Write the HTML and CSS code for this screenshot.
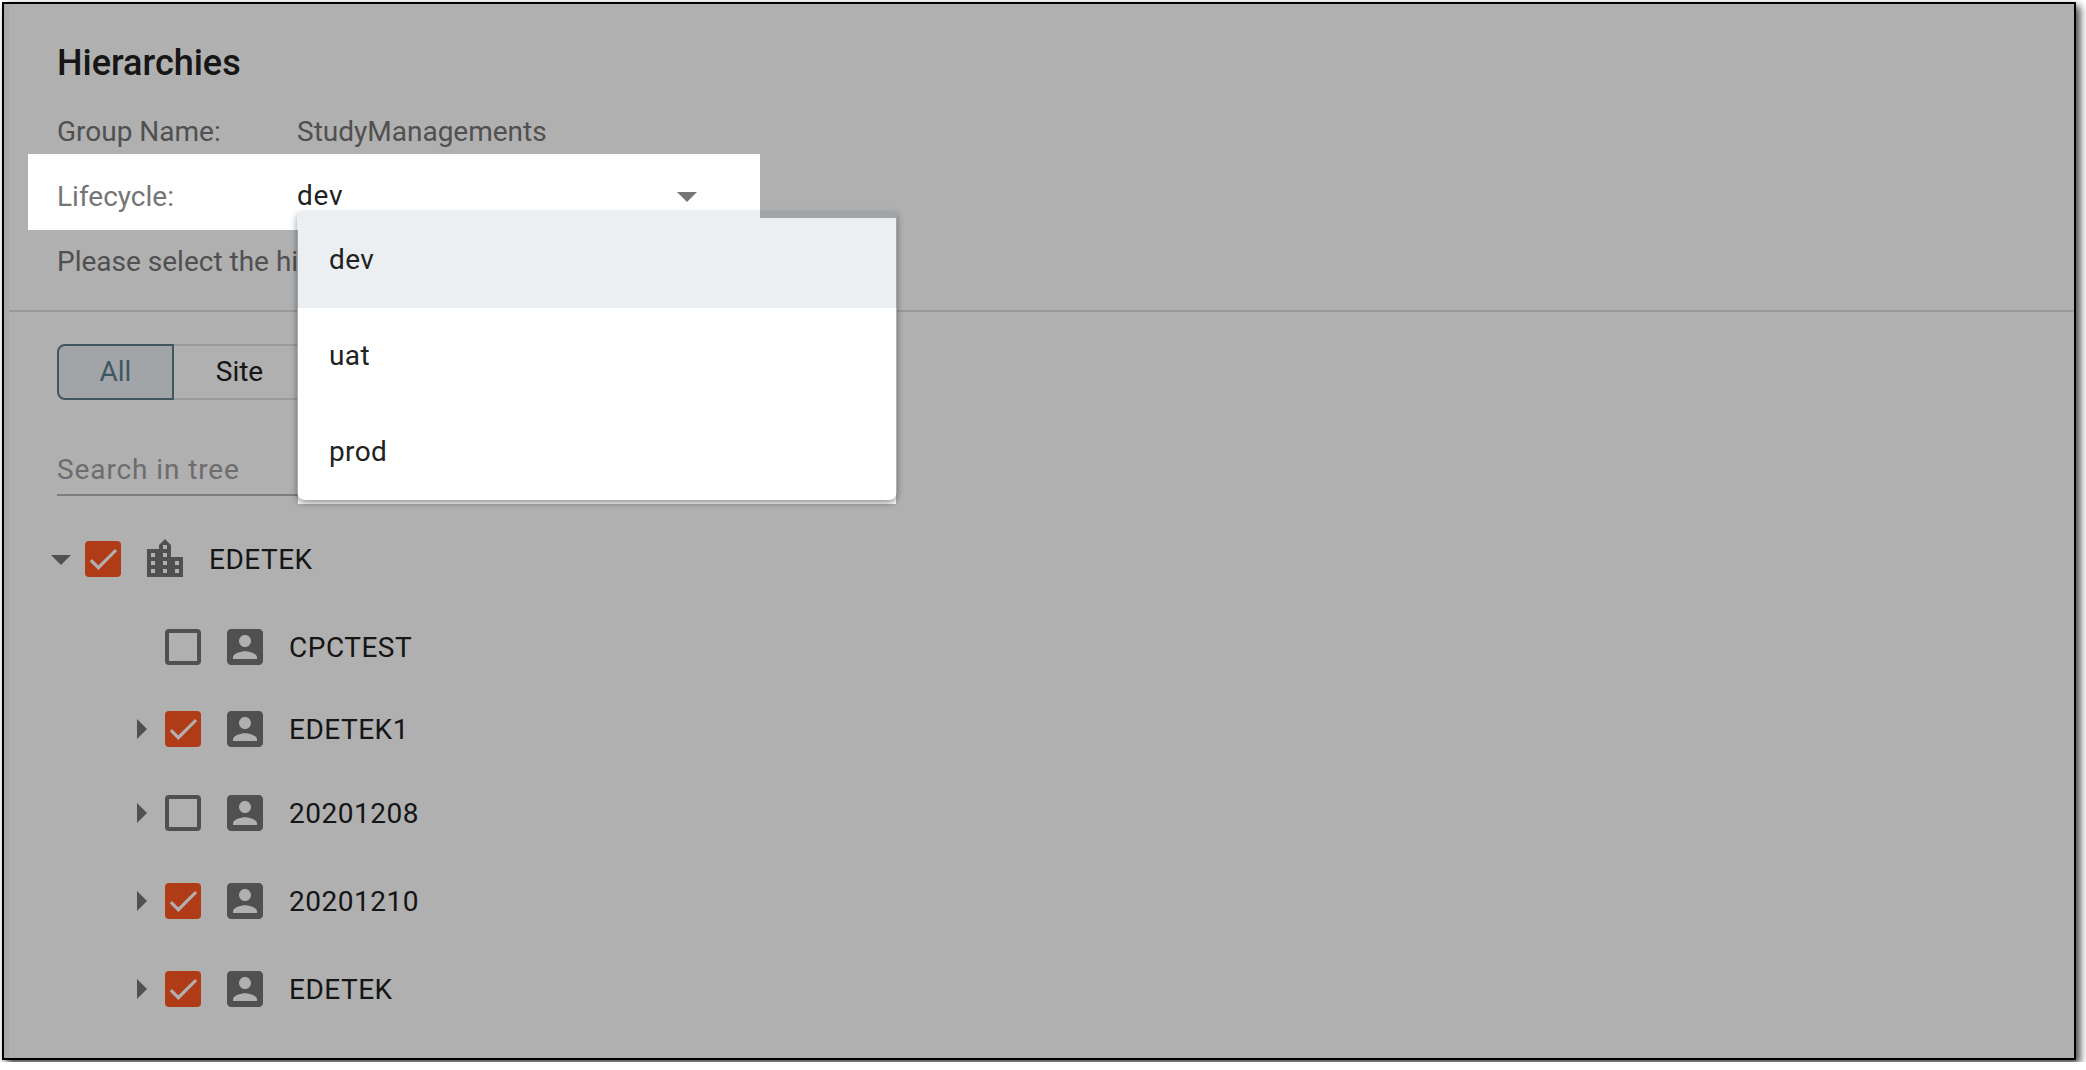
FILE: index.html
```html
<!DOCTYPE html>
<html lang="en">
<head>
    <meta charset="UTF-8">
    <meta name="viewport" content="width=device-width, initial-scale=1.0">
    <title>Hierarchies</title>
    <link rel="stylesheet" href="styles.css">
</head>
<body>

    <!-- Shared icons -->
    <svg class="sprite" width="0" height="0">
        <symbol id="icon-down" viewBox="0 0 24 24"><path d="M7 10l5 5 5-5z"/></symbol>
        <symbol id="icon-right" viewBox="0 0 24 24"><path d="M10 17l5-5-5-5v10z"/></symbol>
        <symbol id="icon-city" viewBox="0 0 24 24"><path d="M15 11V5l-3-3-3 3v2H3v14h18V11h-6zm-8 8H5v-2h2v2zm0-4H5v-2h2v2zm0-4H5V9h2v2zm6 8h-2v-2h2v2zm0-4h-2v-2h2v2zm0-4h-2V9h2v2zm0-4h-2V5h2v2zm6 12h-2v-2h2v2zm0-4h-2v-2h2v2z"/></symbol>
        <symbol id="icon-account" viewBox="0 0 24 24"><path d="M19 3H5c-1.1 0-2 .9-2 2v14c0 1.1.9 2 2 2h14c1.1 0 2-.9 2-2V5c0-1.1-.9-2-2-2z"/><path class="person" d="M12 6c1.65 0 3 1.35 3 3s-1.35 3-3 3-3-1.35-3-3 1.35-3 3-3zM18 18H6v-.8c0-2 4-3.100 6-3.100s6 1.100 6 3.100z"/></symbol>
        <symbol id="icon-check" viewBox="0 0 24 24"><path d="M3.900 12.800L8.900 17.800 20.700 6"/></symbol>
    </svg>

    <div class="window">
        <div class="panel">
            <header class="header">
                <h1>Hierarchies</h1>
                <div class="field">
                    <span class="label">Group Name:</span>
                    <span>StudyManagements</span>
                </div>
                <div class="field">
                    <span class="label">Lifecycle:</span>
                    <div class="select">
                        <span class="value">dev</span>
                        <svg class="icon"><use href="#icon-down"/></svg>
                        <ul class="menu">
                            <li class="selected">dev</li>
                            <li>uat</li>
                            <li>prod</li>
                        </ul>
                    </div>
                </div>
                <div class="field">Please select the hi</div>
            </header>

            <main class="content">
                <div class="toggle">
                    <button class="active">All</button>
                    <button class="site">Site</button>
                </div>
                <input class="search" type="text" placeholder="Search in tree">

                <div class="tree">
                    <div class="node">
                        <svg class="icon"><use href="#icon-down"/></svg>
                        <span class="checkbox checked"><svg><use href="#icon-check"/></svg></span>
                        <svg class="icon type"><use href="#icon-city"/></svg>
                        <span>EDETEK</span>
                    </div>
                    <div class="node child">
                        <span class="icon"></span>
                        <span class="checkbox"></span>
                        <svg class="icon type"><use href="#icon-account"/></svg>
                        <span>CPCTEST</span>
                    </div>
                    <div class="node child first-group">
                        <svg class="icon"><use href="#icon-right"/></svg>
                        <span class="checkbox checked"><svg><use href="#icon-check"/></svg></span>
                        <svg class="icon type"><use href="#icon-account"/></svg>
                        <span>EDETEK1</span>
                    </div>
                    <div class="node child">
                        <svg class="icon"><use href="#icon-right"/></svg>
                        <span class="checkbox"></span>
                        <svg class="icon type"><use href="#icon-account"/></svg>
                        <span>20201208</span>
                    </div>
                    <div class="node child">
                        <svg class="icon"><use href="#icon-right"/></svg>
                        <span class="checkbox checked"><svg><use href="#icon-check"/></svg></span>
                        <svg class="icon type"><use href="#icon-account"/></svg>
                        <span>20201210</span>
                    </div>
                    <div class="node child">
                        <svg class="icon"><use href="#icon-right"/></svg>
                        <span class="checkbox checked"><svg><use href="#icon-check"/></svg></span>
                        <svg class="icon type"><use href="#icon-account"/></svg>
                        <span>EDETEK</span>
                    </div>
                </div>
            </main>
        </div>
        <div class="dim"></div>
    </div>

</body>
</html>
```
FILE: styles.css
```css
* {
    box-sizing: border-box;
}
body {
    margin: 0;
    padding: 2px;
    background-color: #fff;
    font-family: Roboto, "Liberation Sans", sans-serif;
    font-size: 28px;
    color: #757575;
    overflow: hidden;
}
.sprite {
    display: block;
}
.window {
    position: relative;
    width: 2074px;
    height: 1058px;
    border: 2px solid #000;
    background-color: #fff;
    box-shadow: 4px 4px 8px rgba(0, 0, 0, 0.75);
}
.panel {
    height: 100%;
    border-left: 5px solid #f6f6f6;
}

/* Header */
.header {
    height: 308px;
    padding: 35px 48px 0;
    border-bottom: 2px solid #e0e0e0;
}
h1 {
    margin: 0 0 12px;
    font-size: 36px;
    font-weight: 500;
    line-height: 48px;
    color: #212121;
}
.field {
    display: flex;
    align-items: center;
    height: 65px;
}
.label {
    width: 240px;
}
.select {
    position: relative;
    display: flex;
    align-items: center;
    justify-content: space-between;
    width: 414px;
    height: 65px;
    padding-bottom: 1px;
    color: #212121;
    letter-spacing: 0.8px;
}
.value {
    padding-bottom: 1px;
}
.icon {
    flex: none;
    width: 48px;
    height: 48px;
    fill: #757575;
}
.menu {
    position: absolute;
    top: 48px;
    left: 0;
    width: 600px;
    margin: 0;
    padding: 0;
    list-style: none;
    letter-spacing: 0.4px;
    background-color: #fff;
    border-radius: 0 0 8px 8px;
    box-shadow: 0 4px 8px -2px rgba(0, 0, 0, 0.3), 0 2px 6px rgba(0, 0, 0, 0.25);
}
.menu li {
    height: 96px;
    padding: 0 32px;
    line-height: 96px;
}
.menu .selected {
    background-color: #ebeff2;
}

/* Filter and search */
.content {
    padding: 32px 48px 0;
}
.toggle {
    display: flex;
    width: 500px;
}
.toggle button {
    height: 56px;
    padding: 0 0 1px;
    font-family: inherit;
    font-size: 28px;
    background-color: transparent;
    border: 2px solid #dfdfe6;
    color: #212121;
}
.toggle .active {
    width: 117px;
    color: #5a7f8f;
    background-color: #ebeff2;
    border-color: #607d8b;
    border-radius: 8px 0 0 8px;
}
.toggle .site {
    width: 133px;
    border-left: none;
}
.search {
    display: block;
    width: 600px;
    height: 60px;
    margin-top: 36px;
    padding: 8px 0 0;
    border: none;
    border-bottom: 2px solid #b6b6b6;
    background-color: transparent;
    font-family: inherit;
    font-size: 28px;
    letter-spacing: 0.9px;
    outline: none;
}
.search::placeholder {
    color: #9e9e9e;
}

/* Tree */
.tree {
    margin-left: -20px;
    padding-top: 35px;
}
.node {
    display: flex;
    align-items: center;
    height: 56px;
    margin-bottom: 32px;
    color: #212121;
    letter-spacing: 0.5px;
}
.child {
    margin-left: 80px;
}
.first-group {
    margin-top: -6px;
    margin-bottom: 28px;
}
.checkbox {
    width: 36px;
    height: 36px;
    border: 4px solid #757575;
    border-radius: 4px;
}
.checkbox svg {
    display: block;
    width: 36px;
    height: 36px;
    fill: none;
    stroke: #fff;
    stroke-width: 2.1;
}
.checkbox.checked {
    border: none;
    background-color: #ff5722;
}
.type {
    margin: 0 20px;
}
.person {
    fill: #fff;
}

/* Everything but the lifecycle select is dimmed */
.dim {
    position: absolute;
    inset: 0;
    background-color: rgba(0, 0, 0, 0.31);
    clip-path: path(evenodd, "M0 0H2070V1054H0Z M24 150H756V214H892V500H294V226H24Z");
}
```
